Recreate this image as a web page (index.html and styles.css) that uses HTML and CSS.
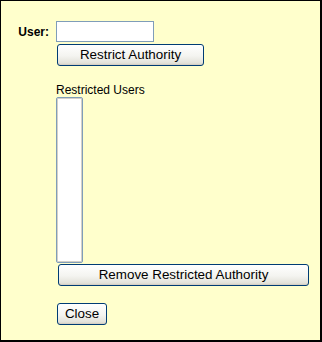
FILE: index.html
```html
<!doctype html>
<html lang="en">
  <head>
    <meta charset="UTF-8" />
    <title>Restrict Authority</title>
    <link rel="stylesheet" href="styles.css">
  </head>
  <body>
    <div class="panel">
      <div class="user-form">
        <label class="field-label" for="user">User:</label>
        <input class="text-input" id="user" type="text" />
        <div></div>
        <button class="btn btn-restrict" type="button">Restrict Authority</button>
      </div>

      <div class="restricted">
        <div class="list-label">Restricted Users</div>
        <select class="listbox" multiple size="10"></select>
        <button class="btn btn-remove" type="button">Remove Restricted Authority</button>
        <button class="btn btn-close" type="button">Close</button>
      </div>
    </div>
  </body>
</html>
```

FILE: styles.css
```css
:root {
  --panel-bg: #ffffcc;
  --input-border: #7f9db9;
  --button-border: #003c74;
}

* {
  margin: 0;
  padding: 0;
  box-sizing: border-box;
}

body {
  font-family: 'Liberation Sans', Arial, sans-serif;
  font-size: 12px;
  color: #000;
  background: #fff;
}

.panel {
  width: 322px;
  height: 342px;
  background-color: var(--panel-bg);
  border-style: solid;
  border-color: #000;
  border-width: 1px 2px 2px 1px;
  padding-top: 20px;
}

.user-form {
  display: grid;
  grid-template-columns: 48px auto;
  column-gap: 7px;
  row-gap: 2px;
  align-items: center;
  justify-content: start;
}

.field-label {
  font-weight: bold;
  text-align: right;
}

.text-input {
  width: 98px;
  height: 21px;
  border: 1px solid var(--input-border);
  background: #fff;
  font: inherit;
  padding: 0 3px;
}

.btn {
  height: 22px;
  font-family: inherit;
  font-size: 13.4px;
  color: #000;
  border: 1px solid var(--button-border);
  border-radius: 3px;
  background: linear-gradient(#ffffff 0%, #f4f4f0 55%, #e3e2da 90%, #d6d0c5 100%);
  box-shadow: inset 0 -1px 0 #d6d0c5;
  line-height: 20px;
  text-align: center;
}

.btn-restrict {
  width: 147px;
  margin-left: 1px;
}

.restricted {
  display: flex;
  flex-direction: column;
  align-items: flex-start;
  padding-left: 55px;
  padding-top: 17px;
}

.list-label {
  line-height: 14px;
}

.listbox {
  width: 27px;
  height: 166px;
  border: 1px solid var(--input-border);
  box-shadow: inset 0 0 0 1px #d4d0c8;
  background: #fff;
  overflow: hidden;
  outline: none;
}

.btn-remove {
  width: 251px;
  margin-left: 2px;
  margin-top: 1px;
}

.btn-close {
  width: 50px;
  margin-left: 1px;
  margin-top: 17px;
}
```
